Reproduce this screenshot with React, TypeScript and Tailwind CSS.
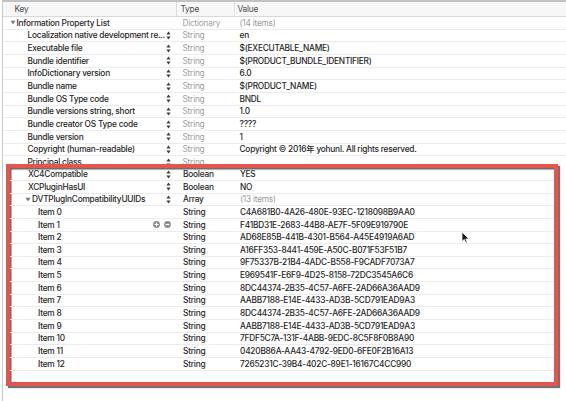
import React from "react";

type RowProps = {
  label: string;
  type: string;
  value: string;
  keyCls: string;
  padCls: string;
  tri?: boolean;
  stepper?: boolean;
  plusMinus?: boolean;
  dim?: boolean;
  dimValue?: boolean;
  dark?: boolean;
};

function Triangle() {
  return (
    <svg width="6" height="5" viewBox="0 0 6 5" className="mr-[1px] shrink-0">
      <path d="M0.5 0.8 L5.5 0.8 L3 4.6 Z" fill="#7a7a7a" />
    </svg>
  );
}

function Stepper() {
  return (
    <svg width="5" height="9" viewBox="0 0 5 9" className="shrink-0">
      <path d="M2.5 0.5 L4.6 3.4 L0.4 3.4 Z" fill="#3c3c3c" />
      <path d="M0.4 5.6 L4.6 5.6 L2.5 8.5 Z" fill="#3c3c3c" />
    </svg>
  );
}

function PlusMinus() {
  return (
    <div className="flex items-center gap-[4px] shrink-0">
      <svg width="7" height="7" viewBox="0 0 7 7">
        <circle cx="3.5" cy="3.5" r="3.4" fill="#8c8c8c" />
        <path d="M3.5 1.6 V5.4 M1.6 3.5 H5.4" stroke="#fff" strokeWidth="1.1" />
      </svg>
      <svg width="7" height="7" viewBox="0 0 7 7">
        <circle cx="3.5" cy="3.5" r="3.4" fill="#8c8c8c" />
        <path d="M1.6 3.5 H5.4" stroke="#fff" strokeWidth="1.2" />
      </svg>
    </div>
  );
}

function Row({ label, type, value, keyCls, padCls, tri, stepper, plusMinus, dim, dimValue, dark }: RowProps) {
  return (
    <div className="flex items-center h-[12.67px] border-b border-[#ececec]">
      <div className={`${keyCls} ${padCls} flex items-center shrink-0 pr-[6px]`}>
        {tri && <Triangle />}
        <span className="whitespace-nowrap text-[#262626]">{label}</span>
        <div className="ml-auto flex items-center">
          {stepper && <Stepper />}
          {plusMinus && <PlusMinus />}
        </div>
      </div>
      <div className={`w-[58px] shrink-0 pl-[6px] ${dim ? "text-[#a3a3a3] font-normal" : dark ? "text-[#262626]" : "text-[#9d9d9d] font-normal"}`}>
        {type}
      </div>
      <div className={`flex-1 pl-[5px] whitespace-nowrap ${dimValue ? "text-[#9a9a9a] font-normal" : "text-[#262626]"}`}>
        {value}
      </div>
    </div>
  );
}

const topRows: [string, string][] = [
  ["Localization native development re...", "en"],
  ["Executable file", "$(EXECUTABLE_NAME)"],
  ["Bundle identifier", "$(PRODUCT_BUNDLE_IDENTIFIER)"],
  ["InfoDictionary version", "6.0"],
  ["Bundle name", "$(PRODUCT_NAME)"],
  ["Bundle OS Type code", "BNDL"],
  ["Bundle versions string, short", "1.0"],
  ["Bundle creator OS Type code", "????"],
  ["Bundle version", "1"],
  ["Copyright (human-readable)", "Copyright © 2016年 yohunl. All rights reserved."],
];

const uuids = [
  "C4A681B0-4A26-480E-93EC-1218098B9AA0",
  "F41BD31E-2683-44B8-AE7F-5F09E919790E",
  "AD68E85B-441B-4301-B564-A45E4919A6AD",
  "A16FF353-8441-459E-A50C-B071F53F51B7",
  "9F75337B-21B4-4ADC-B558-F9CADF7073A7",
  "E969541F-E6F9-4D25-8158-72DC3545A6C6",
  "8DC44374-2B35-4C57-A6FE-2AD66A36AAD9",
  "AABB7188-E14E-4433-AD3B-5CD791EAD9A3",
  "8DC44374-2B35-4C57-A6FE-2AD66A36AAD9",
  "AABB7188-E14E-4433-AD3B-5CD791EAD9A3",
  "7FDF5C7A-131F-4ABB-9EDC-8C5F8F0B8A90",
  "0420B86A-AA43-4792-9ED0-6FE0F2B16A13",
  "7265231C-39B4-402C-89E1-16167C4CC990",
];

export default function App() {
  return (
    <div className="relative w-[566px] h-[401px] overflow-hidden bg-white font-['Inter','Liberation_Sans','Noto_Sans_CJK_SC',sans-serif] text-[8.3px] tracking-[-0.22px] font-medium leading-none">
      <div className="ml-[1.5px] h-full border-l border-[#c9c9c9]">
        {/* header */}
        <div className="flex h-[17px] items-center border-t-2 border-b border-t-[#c2c2c2] border-b-[#d9d9d9] bg-[#f7f7f7] text-[#4c4c4c] font-normal">
          <div className="w-[174px] h-full flex items-center pl-[12px] border-r border-[#dcdcdc]">Key</div>
          <div className="w-[58px] h-full flex items-center pl-[4px] border-r border-[#dcdcdc]">Type</div>
          <div className="flex-1 pl-[3px]">Value</div>
        </div>

        <Row label="Information Property List" type="Dictionary" value="(14 items)" keyCls="w-[174px]" padCls="pl-[7px]" tri dim dimValue />
        {topRows.map(([k, v]) => (
          <Row key={k} label={k} type="String" value={v} keyCls="w-[174px]" padCls="pl-[25px]" stepper />
        ))}
        <div className="h-[8px] overflow-hidden">
          <Row label="Principal class" type="String" value="" keyCls="w-[174px]" padCls="pl-[25px]" stepper />
        </div>

        {/* highlighted section */}
        <div className="ml-[3.5px] w-[552px] border-4 border-[#e4554e] shadow-[2px_2px_1px_rgba(0,0,0,0.55),inset_1.5px_1.5px_1px_rgba(0,0,0,0.6)]">
          <Row label="XC4Compatible" type="Boolean" value="YES" keyCls="w-[167px]" padCls="pl-[18px]" stepper dark />
          <Row label="XCPluginHasUI" type="Boolean" value="NO" keyCls="w-[167px]" padCls="pl-[18px]" stepper dark />
          <Row label="DVTPlugInCompatibilityUUIDs" type="Array" value="(13 items)" keyCls="w-[167px]" padCls="pl-[15px]" tri stepper dark dimValue />
          {uuids.map((u, i) => (
            <Row
              key={i}
              label={`Item ${i}`}
              type="String"
              value={u}
              keyCls="w-[167px]"
              padCls="pl-[28px]"
              plusMinus={i === 1}
              dark
            />
          ))}
          <div className="h-[11px]" />
        </div>
      </div>

      {/* mouse pointer */}
      <svg className="absolute left-[461px] top-[231px]" width="9" height="13" viewBox="0 0 9 13">
        <path d="M1 1 L1 10.5 L3.3 8.4 L4.9 12 L6.3 11.4 L4.8 7.9 L7.9 7.9 Z" fill="#111" stroke="#fff" strokeWidth="0.8" strokeLinejoin="round" />
      </svg>
    </div>
  );
}
